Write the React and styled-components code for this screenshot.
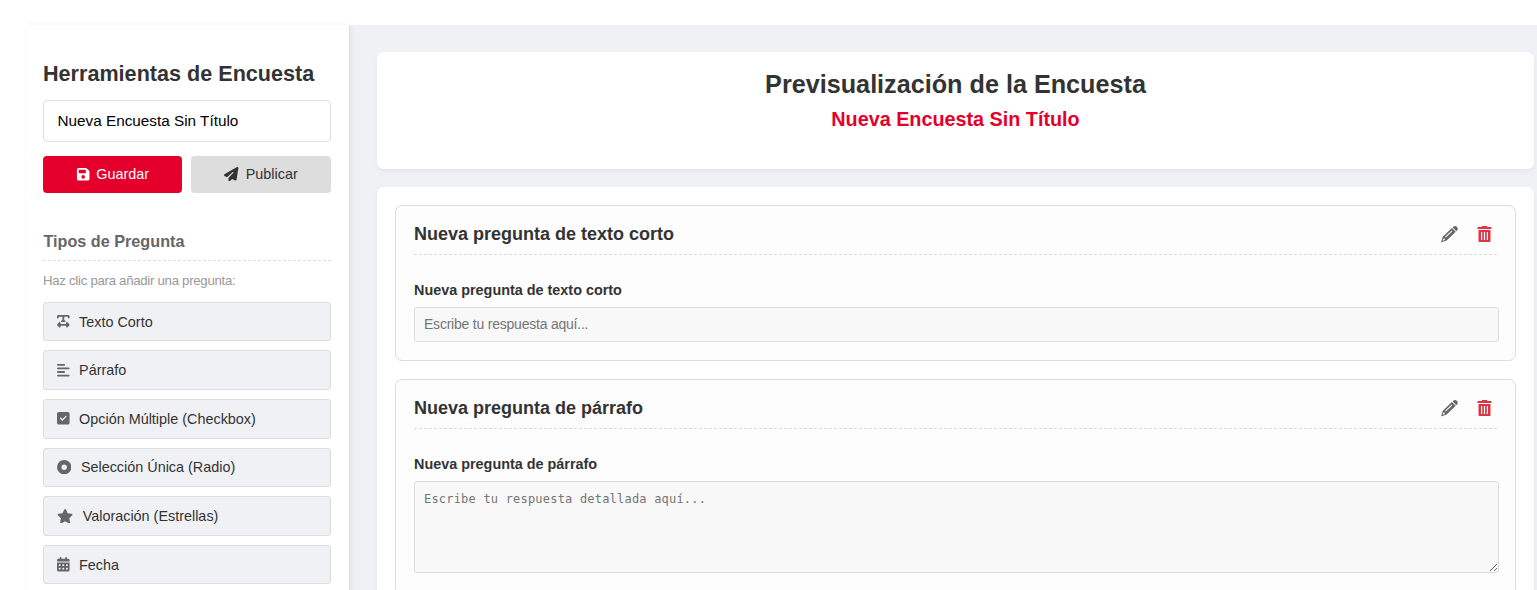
import React from 'react';
import styled, { createGlobalStyle, css } from 'styled-components';
import {
  FaTextWidth, FaAlignLeft, FaSquareCheck, FaCircleDot, FaStar,
  FaCalendarDays, FaFloppyDisk, FaPaperPlane,
} from 'react-icons/fa6';

const GlobalStyle = createGlobalStyle`
  *, *::before, *::after { box-sizing: border-box; }
  body {
    margin: 0;
    overflow: hidden;
    background: #fff;
    color: #333;
    font-family: "Liberation Sans", Arial, sans-serif;
  }
  h2, h3, h4, p { margin: 0; }
`;

const Page = styled.div`
  display: flex;
  height: 590px;
  padding: 25px 0 0 25px;
  overflow: hidden;
`;

const Sidebar = styled.aside`
  position: relative;
  z-index: 1;
  flex: 0 0 325px;
  height: 720px;
  padding: 36px 18px 18px 18px;
  background: #fff;
  border-right: 1px solid #ddd;
  box-shadow: 2px 0 5px rgba(0, 0, 0, 0.05);
`;

const SidebarTitle = styled.h2`
  height: 26px;
  line-height: 26px;
  font-size: 21.6px;
  white-space: nowrap;
`;

const SurveyName = styled.input`
  display: block;
  width: 288px;
  height: 42px;
  margin-top: 13px;
  padding: 0 13.5px 1px;
  border: 1px solid #ddd;
  border-radius: 4px;
  background: #fff;
  color: #000;
  font: 15.3px "Liberation Sans", Arial, sans-serif;
  outline: none;
`;

const Actions = styled.div`
  display: flex;
  gap: 9px;
  margin-top: 14px;
`;

const ActionButton = styled.button`
  display: flex;
  flex: ${({ $primary }) => ($primary ? '0 0 139px' : '1')};
  align-items: center;
  justify-content: center;
  gap: ${({ $primary }) => ($primary ? 6 : 7)}px;
  height: 37px;
  padding: 0 0 1px;
  border: 0;
  border-radius: 4px;
  font: 14.4px "Liberation Sans", Arial, sans-serif;
  ${({ $primary }) => ($primary
    ? css`background: #e4002b; color: #fff;`
    : css`background: #ddd; color: #333;`)}
`;

const TypesTitle = styled.h3`
  height: 31px;
  margin-top: 37px;
  padding-left: 0.5px;
  border-bottom: 1px dashed #ddd;
  color: #666;
  font-size: 16.2px;
  line-height: 23px;
`;

const Hint = styled.p`
  margin-top: 11px;
  color: #999;
  font-size: 13.2px;
  line-height: 18px;
  letter-spacing: -0.27px;
`;

const TypeList = styled.div`
  display: flex;
  flex-direction: column;
  gap: 9px;
  margin-top: 11.8px;
`;

const TypeButton = styled.button`
  display: flex;
  align-items: center;
  gap: 9.4px;
  height: 39.6px;
  padding: 0 13.1px;
  border: 1px solid #ddd;
  border-radius: 3px;
  background: #f0f1f5;
  color: #333;
  font: 14.4px "Liberation Sans", Arial, sans-serif;
  svg {
    width: ${({ $iconWidth }) => $iconWidth}px;
    height: 14.4px;
    margin-bottom: 0.5px;
    color: #666;
  }
`;

const Main = styled.main`
  display: flex;
  flex: 1;
  flex-direction: column;
  gap: 18px;
  min-width: 0;
  height: 720px;
  padding: 27px 3px 0 27px;
  background: #f0f1f5;
`;

const Card = styled.section`
  border-radius: 7px;
  background: #fff;
  box-shadow: 0 2px 5px rgba(0, 0, 0, 0.05);
`;

const PreviewHeader = styled(Card)`
  flex: 0 0 117px;
  padding-top: 16px;
  text-align: center;
`;

const PreviewTitle = styled.h2`
  font-size: 25.2px;
  line-height: 32px;
`;

const PreviewName = styled.h3`
  margin-top: 6px;
  color: #e4002b;
  font-size: 19.8px;
  line-height: 26px;
`;

const Questions = styled(Card)`
  display: flex;
  flex: 1;
  flex-direction: column;
  gap: 18px;
  padding: 18px;
`;

const Question = styled.article`
  padding: 18px 18px ${({ $bottom }) => $bottom || 18}px;
  border: 1px solid #ddd;
  border-radius: 7px;
  background: #fdfdfd;
`;

const QuestionHeader = styled.header`
  display: flex;
  justify-content: space-between;
  height: 31px;
  border-bottom: 1px dashed #ddd;
  h3 { font-size: 18px; line-height: 20px; }
`;

const Tools = styled.div`
  display: flex;
  gap: 19px;
  padding: 2px 5px 0 0;
`;

const ToolButton = styled.button`
  display: flex;
  height: 17px;
  padding: 0;
  border: 0;
  background: none;
  color: ${({ $danger }) => ($danger ? '#dc3545' : '#666')};
`;

const Label = styled.label`
  display: block;
  margin-top: 26px;
  font-size: 14.4px;
  font-weight: bold;
  line-height: 18px;
`;

const fieldStyle = css`
  display: block;
  width: calc(100% + 2px);
  margin-top: 8px;
  border: 1px solid #ddd;
  border-radius: 3px;
  background: #f8f8f8;
  outline: none;
  &::placeholder { color: #757575; opacity: 1; }
`;

const ShortAnswer = styled.input`
  ${fieldStyle}
  height: 35px;
  padding: 0 9px 1px;
  font: 14px "Liberation Sans", Arial, sans-serif;
  letter-spacing: -0.22px;
`;

const LongAnswer = styled.textarea`
  ${fieldStyle}
  height: 92px;
  padding: 9px;
  font: 12px/16px "DejaVu Sans Mono", monospace;
  letter-spacing: 0.2px;
  resize: vertical;
`;

const TYPES = [
  [FaTextWidth, 'Texto Corto', 12.6],
  [FaAlignLeft, 'Párrafo', 12.6],
  [FaSquareCheck, 'Opción Múltiple (Checkbox)', 12.6],
  [FaCircleDot, 'Selección Única (Radio)', 14.4],
  [FaStar, 'Valoración (Estrellas)', 16.2],
  [FaCalendarDays, 'Fecha', 12.6],
];

function PencilIcon() {
  return (
    <svg width="17" height="17" viewBox="0 0 17 17" fill="currentColor">
      <path d="M11.6 1.3 12.5.6c.9-.8 2.2-.8 3 0l.7.7c.8.8.8 2 0 2.9l-.9 1z" />
      <path
        fillRule="evenodd"
        d="M10.9 2 14.7 5.8 5.7 14.5 0 16.4 1.8 10.8zM10.7 4.5 4.1 10.8l.7.7 6.6-6.3zM2.5 12.4l-.9 2.4 2.4-.9-.3-1.1z"
      />
    </svg>
  );
}

function TrashIcon() {
  return (
    <svg width="15" height="17" viewBox="0 0 15 17" fill="currentColor">
      <path d="M5.2 0h4.6l.7 1H14a.5.5 0 0 1 .5.5V3H.5V1.500A.5.5 0 0 1 1 1h3.500z" />
      <path
        fillRule="evenodd"
        d="M1.500 4h12v10.700c0 .8-.5 1.300-1.300 1.300H2.800c-.8 0-1.300-.5-1.300-1.300zM4 6v8h1.200V6zM6.900 6v8h1.200V6zM9.800 6v8H11V6z"
      />
    </svg>
  );
}

function QuestionCard({ title, bottom, children }) {
  return (
    <Question $bottom={bottom}>
      <QuestionHeader>
        <h3>{title}</h3>
        <Tools>
          <ToolButton aria-label="Editar"><PencilIcon /></ToolButton>
          <ToolButton $danger aria-label="Eliminar"><TrashIcon /></ToolButton>
        </Tools>
      </QuestionHeader>
      <Label>{title}</Label>
      {children}
    </Question>
  );
}

export default function App() {
  return (
    <>
      <GlobalStyle />
      <Page>
        <Sidebar>
          <SidebarTitle>Herramientas de Encuesta</SidebarTitle>
          <SurveyName defaultValue="Nueva Encuesta Sin Título" />
          <Actions>
            <ActionButton $primary><FaFloppyDisk />Guardar</ActionButton>
            <ActionButton><FaPaperPlane />Publicar</ActionButton>
          </Actions>
          <TypesTitle>Tipos de Pregunta</TypesTitle>
          <Hint>Haz clic para añadir una pregunta:</Hint>
          <TypeList>
            {TYPES.map(([Icon, label, iconWidth]) => (
              <TypeButton key={label} $iconWidth={iconWidth}><Icon />{label}</TypeButton>
            ))}
          </TypeList>
        </Sidebar>
        <Main>
          <PreviewHeader>
            <PreviewTitle>Previsualización de la Encuesta</PreviewTitle>
            <PreviewName>Nueva Encuesta Sin Título</PreviewName>
          </PreviewHeader>
          <Questions>
            <QuestionCard title="Nueva pregunta de texto corto">
              <ShortAnswer placeholder="Escribe tu respuesta aquí..." />
            </QuestionCard>
            <QuestionCard title="Nueva pregunta de párrafo" bottom={22}>
              <LongAnswer placeholder="Escribe tu respuesta detallada aquí..." />
            </QuestionCard>
          </Questions>
        </Main>
      </Page>
    </>
  );
}
